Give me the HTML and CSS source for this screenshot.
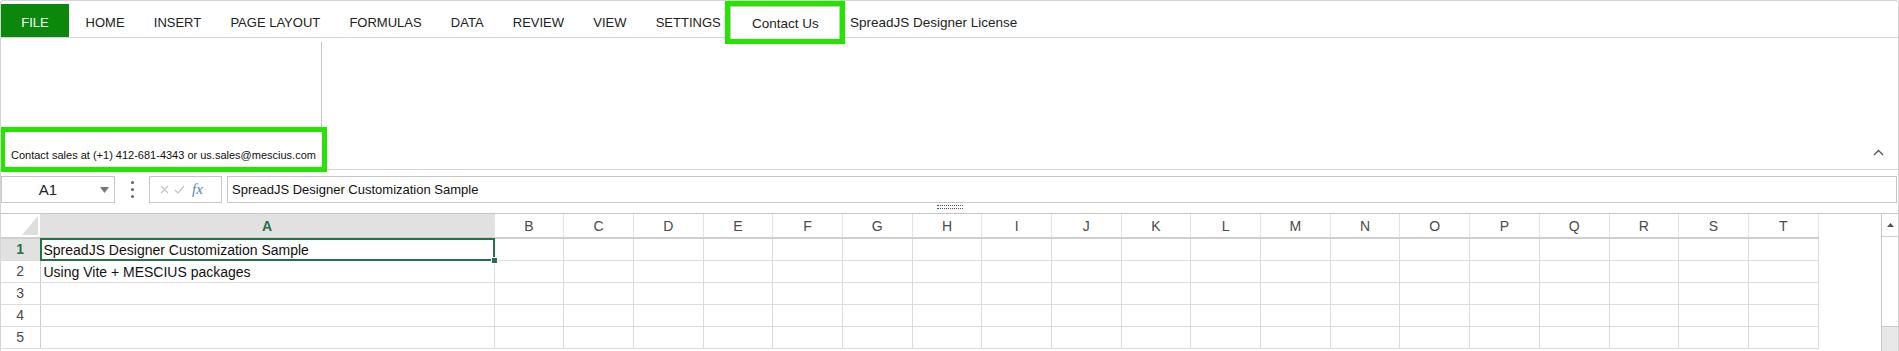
FILE: index.html
```html
<!DOCTYPE html>
<html>
  <head>
    <meta charset="UTF-8">
    <title>SpreadJS Designer Customization Sample</title>
    <link rel="stylesheet" href="styles.css">
  </head>
  <body>
    <div class="designer">

      <ul class="tabs">
        <li class="file">FILE</li>
        <li>HOME</li>
        <li>INSERT</li>
        <li>PAGE LAYOUT</li>
        <li>FORMULAS</li>
        <li>DATA</li>
        <li>REVIEW</li>
        <li>VIEW</li>
        <li>SETTINGS</li>
        <li class="active marked">Contact Us</li>
        <li>SpreadJS Designer License</li>
      </ul>

      <div class="ribbon">
        <div class="group">
          <div class="group-body"></div>
          <div class="group-label marked">Contact sales at (+1) 412-681-4343 or us.sales@mescius.com</div>
        </div>
        <div class="collapse">
          <svg width="11" height="7" viewBox="0 0 11 7"><path d="M1 6 L5.5 1.5 L10 6" fill="none" stroke="#555" stroke-width="1.3"/></svg>
        </div>
      </div>

      <div class="formula-bar">
        <div class="name-box">
          <span class="name">A1</span>
          <span class="drop"><svg width="9" height="6" viewBox="0 0 9 6"><path d="M0 0 H9 L4.5 6 Z" fill="#777"/></svg></span>
        </div>
        <div class="dots"><i></i><i></i><i></i></div>
        <div class="fx-box">
          <svg width="9" height="9" viewBox="0 0 9 9"><path d="M1 1 L8 8 M8 1 L1 8" stroke="#c4c4c4" stroke-width="1.2"/></svg>
          <svg width="11" height="9" viewBox="0 0 11 9"><path d="M1 5 L4 8 L10 1" fill="none" stroke="#c4c4c4" stroke-width="1.2"/></svg>
          <span class="fx">fx</span>
        </div>
        <div class="formula">SpreadJS Designer Customization Sample</div>
      </div>

      <div class="splitter"><span class="grip"></span></div>

      <div class="sheet">
        <table class="grid">
          <colgroup>
            <col class="c-head"><col class="c-a">
            <col><col><col><col><col><col><col><col><col><col>
            <col><col><col><col><col><col><col><col><col>
          </colgroup>
          <thead>
            <tr>
              <th class="corner"><span></span></th>
              <th class="cur">A</th><th>B</th><th>C</th><th>D</th><th>E</th><th>F</th><th>G</th>
              <th>H</th><th>I</th><th>J</th><th>K</th><th>L</th><th>M</th><th>N</th>
              <th>O</th><th>P</th><th>Q</th><th>R</th><th>S</th><th>T</th>
            </tr>
          </thead>
          <tbody>
            <tr>
              <th class="cur">1</th>
              <td class="sel">SpreadJS Designer Customization Sample</td>
              <td></td><td></td><td></td><td></td><td></td><td></td><td></td><td></td><td></td><td></td>
              <td></td><td></td><td></td><td></td><td></td><td></td><td></td><td></td><td></td>
            </tr>
            <tr>
              <th>2</th>
              <td>Using Vite + MESCIUS packages</td>
              <td></td><td></td><td></td><td></td><td></td><td></td><td></td><td></td><td></td><td></td>
              <td></td><td></td><td></td><td></td><td></td><td></td><td></td><td></td><td></td>
            </tr>
            <tr>
              <th>3</th>
              <td></td>
              <td></td><td></td><td></td><td></td><td></td><td></td><td></td><td></td><td></td><td></td>
              <td></td><td></td><td></td><td></td><td></td><td></td><td></td><td></td><td></td>
            </tr>
            <tr>
              <th>4</th>
              <td></td>
              <td></td><td></td><td></td><td></td><td></td><td></td><td></td><td></td><td></td><td></td>
              <td></td><td></td><td></td><td></td><td></td><td></td><td></td><td></td><td></td>
            </tr>
            <tr>
              <th>5</th>
              <td></td>
              <td></td><td></td><td></td><td></td><td></td><td></td><td></td><td></td><td></td><td></td>
              <td></td><td></td><td></td><td></td><td></td><td></td><td></td><td></td><td></td>
            </tr>
          </tbody>
        </table>

        <div class="vscroll">
          <div class="up"><svg width="7" height="4" viewBox="0 0 7 4"><path d="M0 4 L3.5 0 L7 4 Z" fill="#555"/></svg></div>
          <div class="thumb"></div>
          <div class="track"></div>
        </div>
      </div>

    </div>
  </body>
</html>
```

FILE: styles.css
```css
/* Page */
body {
  margin: 0;
  overflow: hidden;
  background: #fff;
  font-family: "Liberation Sans", Arial, sans-serif;
  color: #222;
}

.designer {
  height: 351px;
  box-sizing: border-box;
  border: 1px solid #d4d4d4;
  border-bottom: none;
  border-radius: 3px 3px 0 0;
  overflow: hidden;
}

/* Green highlight boxes */
.marked {
  position: relative;
  z-index: 1;
  outline: 5px solid #24e400;
}

/* Ribbon tabs */
.tabs {
  display: flex;
  list-style: none;
  margin: 0;
  padding: 3px 0 0;
  height: 33px;
  border-bottom: 1px solid #d4d4d4;
}

.tabs li {
  padding: 4px 14.6px 0;
  line-height: 29px;
  font-size: 13px;
  white-space: nowrap;
}

.tabs li.file {
  width: 68px;
  box-sizing: border-box;
  padding: 4px 0 0;
  margin-right: 2px;
  text-align: center;
  background: #0b870b;
  color: #fff;
}

.tabs li.active {
  width: 110px;
  height: 33px;
  box-sizing: border-box;
  margin: 2px -5px 0;
  padding: 2px 0 0;
  text-align: center;
  font-size: 13.5px;
  background: #fff;
  border: 1px solid #c8c8c8;
  border-bottom: none;
}

.tabs li.active + li {
  font-size: 13.5px;
}

/* Ribbon body */
.ribbon {
  display: flex;
  height: 131px;
  border-bottom: 1px solid #d4d4d4;
}

.group {
  width: 321px;
  display: flex;
  flex-direction: column;
}

.group-body {
  height: 85px;
  margin-top: 4px;
  border-right: 1px solid #c6c6c6;
}

.group-label {
  height: 35px;
  margin: 5px 0 0 4px;
  padding: 0 0 5px 6px;
  box-sizing: border-box;
  display: flex;
  align-items: flex-end;
  font-size: 11px;
  line-height: 13px;
  color: #111;
  white-space: nowrap;
  background: #fff;
}

.collapse {
  align-self: flex-end;
  margin: 0 14px 13px auto;
  line-height: 0;
}

/* Formula bar */
.formula-bar {
  display: flex;
  height: 27px;
  margin-top: 6px;
}

.name-box {
  width: 114px;
  box-sizing: border-box;
  border: 1px solid #c6c6c6;
  display: flex;
  align-items: center;
  font-size: 15px;
}

.name-box .name {
  flex: 1;
  text-align: center;
}

.name-box .drop {
  width: 20px;
  line-height: 0;
  text-align: center;
}

.dots {
  width: 34px;
  display: flex;
  flex-direction: column;
  align-items: center;
  justify-content: center;
  gap: 4px;
}

.dots i {
  width: 3px;
  height: 3px;
  border-radius: 50%;
  background: #666;
}

.fx-box {
  width: 73px;
  box-sizing: border-box;
  border: 1px solid #c6c6c6;
  display: flex;
  align-items: center;
  gap: 5px;
  padding-left: 10px;
}

.fx-box .fx {
  margin-left: 2px;
  font-family: "Liberation Serif", "Times New Roman", serif;
  font-style: italic;
  font-size: 15px;
  color: #4f83c9;
}

.formula {
  flex: 1;
  margin: 0 1px 0 5px;
  border: 1px solid #c6c6c6;
  padding-left: 4px;
  font-size: 13px;
  line-height: 25px;
  color: #111;
  white-space: nowrap;
}

/* Splitter between formula bar and sheet */
.splitter {
  height: 10px;
  border-bottom: 1px solid #c6c6c6;
  display: flex;
  justify-content: center;
}

.grip {
  width: 26px;
  height: 2px;
  margin-top: 2px;
  border-top: 1px dotted #555;
  border-bottom: 1px dotted #555;
}

/* Sheet */
.sheet {
  display: flex;
  height: 140px;
}

.grid {
  width: 1817px;
  align-self: flex-start;
  border-collapse: collapse;
  table-layout: fixed;
  font-size: 14px;
}

.grid col { width: 69.7px; }
.grid col.c-head { width: 39px; }
.grid col.c-a { width: 454px; }

.grid thead tr { height: 24px; }
.grid tbody tr { height: 22px; }

.grid th {
  padding: 0;
  font-weight: normal;
  color: #4a4a4a;
  text-align: center;
  background: #fff;
  border: 1px solid #e2e2e2;
  border-top: none;
}

.grid thead th {
  border-bottom: 2px solid #cfcfcf;
}

.grid tbody th {
  border-left: none;
  border-right: 1px solid #cfcfcf;
  border-bottom-color: #dcdcdc;
}

.grid th.cur {
  background: #e1e1e1;
  color: #217346;
  font-weight: bold;
}

.grid th.corner {
  vertical-align: bottom;
  border-left: none;
  line-height: 0;
}

.grid th.corner span {
  display: block;
  width: 0;
  height: 0;
  margin: 0 2px 2px auto;
  border-left: 16px solid transparent;
  border-bottom: 19px solid #dedede;
}

.grid td {
  padding: 0 3px;
  border: 1px solid #dcdcdc;
  line-height: 20px;
  vertical-align: bottom;
  white-space: nowrap;
  color: #111;
}

/* Active cell A1 */
.grid td.sel {
  position: relative;
}

.grid td.sel::after {
  content: "";
  position: absolute;
  left: -1px;
  top: -1px;
  right: -1px;
  bottom: -1px;
  border: 2px solid #217346;
}

.grid td.sel::before {
  content: "";
  position: absolute;
  right: -4px;
  bottom: -4px;
  width: 5px;
  height: 5px;
  background: #217346;
  border: 1px solid #fff;
  z-index: 2;
}

/* Vertical scrollbar */
.vscroll {
  width: 16px;
  margin-left: auto;
  border-left: 1px solid #c8c8c8;
  display: flex;
  flex-direction: column;
}

.vscroll .up {
  height: 23px;
  box-sizing: border-box;
  padding-top: 8px;
  text-align: center;
  line-height: 0;
  border-bottom: 1px solid #d0d0d0;
}

.vscroll .thumb {
  height: 89px;
  background: #fff;
  border-bottom: 1px solid #c8c8c8;
}

.vscroll .track {
  flex: 1;
  background: #e8e8e8;
}
```
